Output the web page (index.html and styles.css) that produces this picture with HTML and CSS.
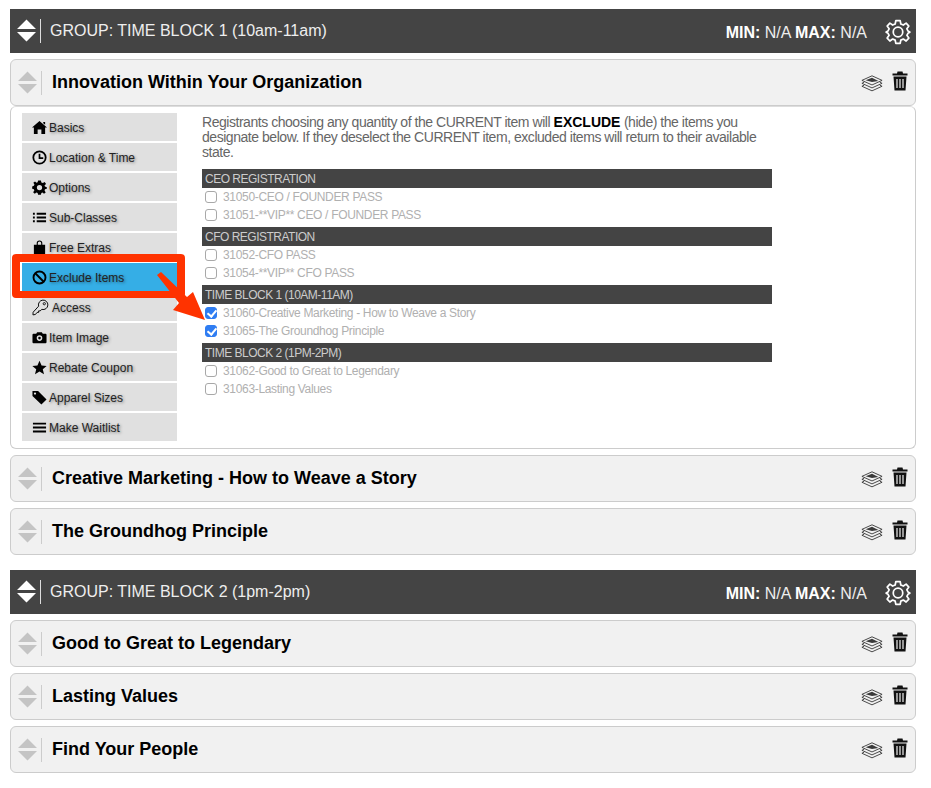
FILE: index.html
```html
<!DOCTYPE html>
<html lang="en">
<head>
<meta charset="utf-8">
<title>Groups</title>
<link rel="stylesheet" href="styles.css">
</head>
<body>
<svg class="defs" width="0" height="0" aria-hidden="true">
  <symbol id="sort" viewBox="0 0 20 24"><path d="M10 0 L20 10 H0 Z M0 13 H20 L10 23 Z"/></symbol>
  <symbol id="layers" viewBox="0 0 24 18"><path d="M12 .6 L23 5.6 L12 10.6 L1 5.6 Z" fill="none" stroke="currentColor" stroke-width="1" stroke-linejoin="round"/><path d="M5 5.4 L12 2.6 L19 6.2 L12 7.4 Z" fill="currentColor"/><path d="M3.5 7.6 L1 8.8 L12 13.8 L23 8.8 L20.5 7.6 M3.5 10.8 L1 12 L12 17 L23 12 L20.5 10.8" fill="none" stroke="currentColor" stroke-width="1" stroke-linejoin="round"/></symbol>
  <symbol id="trash" viewBox="0 0 16 20"><path d="M5.5 0.5 H10.5 L11 2.5 H15.5 V4.5 H0.5 V2.5 H5 Z M1.5 5.5 H14.5 L13.5 19.5 H2.5 Z" /><path d="M5 8 V17 M8 8 V17 M11 8 V17" stroke="#f1f1f1" stroke-width="1.2" fill="none"/></symbol>
  <symbol id="gear" viewBox="0 0 24 24"><path d="M10 1.5 H14 L14.6 4.6 L16.9 5.6 L19.5 3.8 L22 6.5 L20.2 9.1 L21.2 11 L22.9 12 V12.2 L21.2 13.2 L20.2 15.1 L22 17.6 L19.5 20.3 L16.9 18.5 L14.6 19.5 L14 22.5 H10 L9.4 19.5 L7.1 18.5 L4.5 20.3 L2 17.6 L3.8 15.1 L2.8 13.2 L1.1 12.2 V12 L2.8 11 L3.8 9.1 L2 6.5 L4.5 3.8 L7.1 5.6 L9.4 4.6 Z" fill="none" stroke="currentColor" stroke-width="1.6" stroke-linejoin="round"/><circle cx="12" cy="12" r="4.4" fill="none" stroke="currentColor" stroke-width="1.6"/></symbol>
</svg>

<section class="group">
  <header class="group-bar">
    <svg class="sort"><use href="#sort"/></svg>
    <span class="group-name">GROUP: TIME BLOCK 1 (10am-11am)</span>
    <span class="limits"><b>MIN:</b> N/A <b>MAX:</b> N/A</span>
    <svg class="gear"><use href="#gear"/></svg>
  </header>

  <div class="item open">
    <svg class="sort"><use href="#sort"/></svg>
    <h2>Innovation Within Your Organization</h2>
    <svg class="layers"><use href="#layers"/></svg>
    <svg class="trash"><use href="#trash"/></svg>
  </div>

  <div class="panel">
    <nav class="menu">
      <a><svg viewBox="0 0 16 16"><path d="M8 1 L16 8 H14 V15 H10 V10 H6 V15 H2 V8 H0 Z M12 2 H14 V5 L12 3.5 Z"/></svg>Basics</a>
      <a><svg viewBox="0 0 16 16"><circle cx="8" cy="8" r="6.6" fill="none" stroke="#000" stroke-width="1.9"/><path d="M8 4 V8.6 H12" fill="none" stroke="#000" stroke-width="1.8"/></svg>Location &amp; Time</a>
      <a><svg viewBox="0 0 16 16"><path fill-rule="evenodd" d="M6.5 .5 H9.5 L10 2.6 L11.6 3.3 L13.5 2.2 L15 4.2 L13.4 5.7 L13.8 7 L15.8 7.8 V9.2 L13.8 9.9 L13.4 11.2 L14.6 13.2 L12.8 14.6 L11.2 13.2 L10 13.8 L9.5 15.6 H6.5 L6 13.8 L4.6 13.2 L3 14.6 L1.2 13 L2.5 11.2 L2 9.9 L.2 9.2 V6.8 L2 6.2 L2.6 4.8 L1.4 3 L3.2 1.6 L4.8 2.8 L6 2.3 Z M8 5.3 A2.8 2.8 0 1 0 8 10.9 A2.8 2.8 0 1 0 8 5.3 Z"/></svg>Options</a>
      <a><svg viewBox="0 0 16 16"><path d="M1 3 H3 V5 H1 Z M5 3 H15 V5 H5 Z M1 7 H3 V9 H1 Z M5 7 H15 V9 H5 Z M1 11 H3 V13 H1 Z M5 11 H15 V13 H5 Z"/></svg>Sub-Classes</a>
      <a><svg viewBox="0 0 16 16"><path d="M2 5 H5 V3.5 A3 3 0 0 1 11 3.5 V5 H14 V15.5 H2 Z M6.2 5 H9.8 V3.5 A1.8 1.8 0 0 0 6.2 3.5 Z" fill-rule="evenodd"/></svg>Free Extras</a>
      <a class="active"><svg viewBox="0 0 16 16"><circle cx="8" cy="8" r="6.4" fill="none" stroke="#000" stroke-width="2"/><path d="M3.5 3.5 L12.5 12.5" stroke="#000" stroke-width="2"/></svg>Exclude Items</a>
      <a class="wide"><svg viewBox="0 0 18 18"><path d="M11.5 1.2 A5 5 0 0 1 16.8 6.3 A5 5 0 0 1 10.4 11 L8.6 12.6 H7 V14.2 H5.4 L3.6 16.4 L1 16.8 L1.2 14 L7 7.6 A5 5 0 0 1 11.5 1.2 Z" fill="none" stroke="#000" stroke-width="1"/><circle cx="13" cy="5" r="1.2" fill="none" stroke="#000" stroke-width=".9"/></svg>Access</a>
      <a><svg viewBox="0 0 16 16"><path fill-rule="evenodd" d="M5.5 2.5 H10.5 L11.5 4 H14.5 A1.2 1.2 0 0 1 15.5 5 V13 A1.2 1.2 0 0 1 14.5 14 H1.5 A1.2 1.2 0 0 1 .5 13 V5 A1.2 1.2 0 0 1 1.5 4 H4.5 Z M8 5.6 A3 3 0 1 0 8 11.6 A3 3 0 1 0 8 5.6 Z M8 7.2 A1.4 1.4 0 1 1 8 10 A1.4 1.4 0 1 1 8 7.2 Z"/></svg>Item Image</a>
      <a><svg viewBox="0 0 16 16"><path d="M8 .8 L10.2 5.8 L15.6 6.3 L11.5 9.8 L12.8 15.1 L8 12.3 L3.2 15.1 L4.5 9.8 L.4 6.3 L5.8 5.8 Z"/></svg>Rebate Coupon</a>
      <a><svg viewBox="0 0 16 16"><path fill-rule="evenodd" d="M.5 1 H6.5 L15.5 10 L10 15.5 L.5 6.5 Z M3.2 2.6 A1.2 1.2 0 1 0 3.2 5 A1.2 1.2 0 1 0 3.2 2.6 Z"/></svg>Apparel Sizes</a>
      <a><svg viewBox="0 0 16 16"><path d="M1 2.8 H15 V4.8 H1 Z M1 7 H15 V9 H1 Z M1 11.2 H15 V13.2 H1 Z"/></svg>Make Waitlist</a>
    </nav>

    <div class="exclude">
      <p class="intro">Registrants choosing any quantity of the CURRENT item will <b>EXCLUDE</b> (hide) the items you designate below. If they deselect the CURRENT item, excluded items will return to their available state.</p>

      <h3>CEO REGISTRATION</h3>
      <label><input type="checkbox">31050-CEO / FOUNDER PASS</label>
      <label><input type="checkbox">31051-**VIP** CEO / FOUNDER PASS</label>

      <h3>CFO REGISTRATION</h3>
      <label><input type="checkbox">31052-CFO PASS</label>
      <label><input type="checkbox">31054-**VIP** CFO PASS</label>

      <h3>TIME BLOCK 1 (10AM-11AM)</h3>
      <label><input type="checkbox" checked>31060-Creative Marketing - How to Weave a Story</label>
      <label><input type="checkbox" checked>31065-The Groundhog Principle</label>

      <h3>TIME BLOCK 2 (1PM-2PM)</h3>
      <label><input type="checkbox">31062-Good to Great to Legendary</label>
      <label><input type="checkbox">31063-Lasting Values</label>
    </div>
  </div>

  <div class="item">
    <svg class="sort"><use href="#sort"/></svg>
    <h2>Creative Marketing - How to Weave a Story</h2>
    <svg class="layers"><use href="#layers"/></svg>
    <svg class="trash"><use href="#trash"/></svg>
  </div>
  <div class="item">
    <svg class="sort"><use href="#sort"/></svg>
    <h2>The Groundhog Principle</h2>
    <svg class="layers"><use href="#layers"/></svg>
    <svg class="trash"><use href="#trash"/></svg>
  </div>
</section>

<section class="group">
  <header class="group-bar">
    <svg class="sort"><use href="#sort"/></svg>
    <span class="group-name">GROUP: TIME BLOCK 2 (1pm-2pm)</span>
    <span class="limits"><b>MIN:</b> N/A <b>MAX:</b> N/A</span>
    <svg class="gear"><use href="#gear"/></svg>
  </header>
  <div class="item">
    <svg class="sort"><use href="#sort"/></svg>
    <h2>Good to Great to Legendary</h2>
    <svg class="layers"><use href="#layers"/></svg>
    <svg class="trash"><use href="#trash"/></svg>
  </div>
  <div class="item">
    <svg class="sort"><use href="#sort"/></svg>
    <h2>Lasting Values</h2>
    <svg class="layers"><use href="#layers"/></svg>
    <svg class="trash"><use href="#trash"/></svg>
  </div>
  <div class="item">
    <svg class="sort"><use href="#sort"/></svg>
    <h2>Find Your People</h2>
    <svg class="layers"><use href="#layers"/></svg>
    <svg class="trash"><use href="#trash"/></svg>
  </div>
</section>

<div class="callout"></div>
<svg class="arrow" viewBox="0 0 60 55"><path d="M11 2 L37 27 L43 22 L55 50 L23 40 L29 33 L7 5 Z" fill="#ff3300"/></svg>
</body>
</html>
```
FILE: styles.css
```css
* { box-sizing: border-box; }
html, body { margin: 0; background: #fff; }
body {
  position: relative;
  padding: 9px 15px 0 10px;
  font-family: "Liberation Sans", Arial, sans-serif;
  color: #000;
  min-height: 788px;
}
.defs { position: absolute; }
.group { margin-bottom: 15px; }

.group-bar {
  display: flex;
  align-items: center;
  height: 44px;
  padding-left: 7px;
  padding-right: 5px;
  background: #444;
  color: #fff;
  margin-bottom: 6px;
}
.group-bar .sort { width: 19px; height: 24px; fill: #fff; flex: none; }
.group-name {
  margin-left: 4px;
  padding-left: 9px;
  border-left: 1px solid #ddd;
  height: 24px;
  line-height: 24px;
  font-size: 16px;
  color: #eee;
  flex: 1;
}
.limits { font-size: 16px; color: #eee; margin-top: 3px; margin-right: 1px; }
.limits b { color: #fff; }
.gear { width: 26px; height: 26px; margin-left: 17px; margin-top: 2px; color: #fff; flex: none; }

.item {
  display: flex;
  align-items: center;
  height: 47px;
  margin-bottom: 6px;
  padding: 0 7px 0 7px;
  background: #f1f1f1;
  border: 1px solid #ccc;
  border-radius: 6px;
  color: #222;
}
.item.open { margin-bottom: 0; }
.item .sort { width: 19px; height: 24px; fill: #c4c4c4; flex: none; }
.item h2 {
  margin: 0 0 0 4px;
  padding-left: 10px;
  border-left: 1px solid #ccc;
  height: 24px;
  line-height: 23px;
  font-size: 18px;
  font-weight: 700;
  color: #000;
  flex: 1;
}
.layers { width: 22px; height: 17px; margin-top: 2px; margin-right: 3px; color: #3a3a3a; flex: none; }
.trash { width: 16px; height: 20px; margin-left: 6px; margin-top: -3px; fill: #111; flex: none; }

.panel {
  display: flex;
  height: 343px;
  margin-bottom: 6px;
  padding: 6px 11px 0 11px;
  background: #fff;
  border: 1px solid #ccc;
  border-top-color: #ddd;
  border-radius: 6px;
}
.menu { width: 155px; flex: none; display: flex; flex-direction: column; gap: 2px; }
.menu a {
  display: flex;
  align-items: center;
  height: 28px;
  padding-left: 10px;
  padding-top: 2px;
  background: #e0e0e0;
  font-size: 12px;
  color: #222;
  text-shadow: 1px 1px 3px rgba(0, 0, 0, .45);
}
.menu a.active { background: #35aee6; }
.menu a svg { width: 15px; height: 15px; margin-right: 2px; flex: none; margin-top: -2px; }
.menu a.wide svg { width: 17px; height: 17px; margin-right: 3px; }

.exclude { margin-left: 25px; width: 570px; flex: none; }
.intro {
  margin: 2px 0 9px;
  font-size: 14px;
  line-height: 15px;
  letter-spacing: -.46px;
  color: #666;
}
.intro b { color: #000; letter-spacing: 0; }
.exclude h3 {
  margin: 0;
  height: 19px;
  padding-left: 3px;
  line-height: 21px;
  font-size: 12px;
  font-weight: 400;
  letter-spacing: -.5px;
  background: #444;
  color: #ccc;
}
.exclude label {
  display: flex;
  align-items: center;
  height: 18px;
  padding-left: 3px;
  font-size: 12px;
  letter-spacing: -.33px;
  color: #b0b0b0;
}
.exclude label input {
  appearance: none;
  position: relative;
  margin: -1px 6px 0 0;
  width: 12px;
  height: 12px;
  background: #fff;
  border: 1px solid #a8a8a8;
  border-radius: 3px;
  flex: none;
}
.exclude label input:checked { background: #2f7df2; border-color: #2f7df2; }
.exclude label input:checked::before {
  content: "";
  position: absolute;
  left: 3px;
  top: 0;
  width: 4px;
  height: 7px;
  border: solid #fff;
  border-width: 0 2px 2px 0;
  transform: rotate(40deg);
}
.exclude label:has(+ h3) { margin-bottom: 3px; }

.callout {
  position: absolute;
  left: 12px;
  top: 254px;
  width: 173px;
  height: 44px;
  border: solid #ff3300;
  border-width: 8px 8px 7px 8px;
  border-radius: 4px;
}
.arrow { position: absolute; left: 150px; top: 270px; width: 60px; height: 55px; }
```
